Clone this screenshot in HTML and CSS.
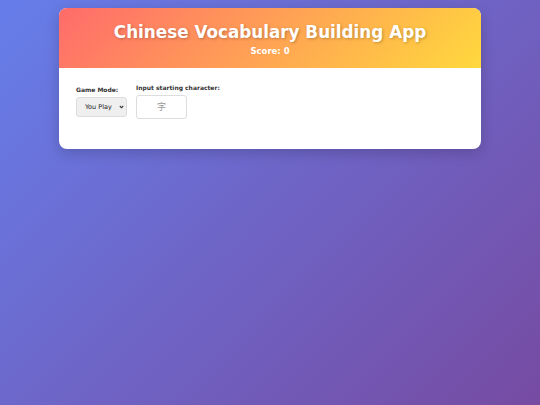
FILE: index.html
```html
<!DOCTYPE html>
<html>
<head>
<meta charset="utf-8">
<link rel="stylesheet" href="styles.css">
</head>
<body>
<div class="app">
  <header class="header">
    <h1 class="title">Chinese Vocabulary Building App</h1>
    <div class="score">Score: 0</div>
  </header>
  <main class="content">
    <div class="controls">
      <div class="field">
        <label class="label">Game Mode:</label>
        <div class="select-wrap">
          <select class="select">
            <option>You Play</option>
          </select>
          <svg class="chevron" width="5" height="4" viewBox="0 0 5 4"><path d="M0.8 1 L2.5 2.8 L4.2 1" fill="none" stroke="#333" stroke-width="1.1"/></svg>
        </div>
      </div>
      <div class="field">
        <label class="label">Input starting character:</label>
        <input class="input" type="text" placeholder="字">
      </div>
    </div>
  </main>
</div>
</body>
</html>
```
FILE: styles.css
```css
html, body {
  margin: 0;
  height: 100%;
}
body {
  background: linear-gradient(135deg, #667eea 0%, #764ba2 100%);
  font-family: "DejaVu Sans", Verdana, sans-serif;
  padding-top: 8px;
  box-sizing: border-box;
}
.app {
  width: 422px;
  margin: 0 auto;
  background: #fff;
  border-radius: 8px;
  overflow: hidden;
  box-shadow: 0 4px 14px rgba(0,0,0,0.18);
}
.header {
  height: 60px;
  box-sizing: border-box;
  padding-top: 13px;
  text-align: center;
  color: #fff;
  background: linear-gradient(135deg, #ff6b6b 0%, #ffd93d 100%);
}
.title {
  margin: 0;
  font-size: 16.8px;
  line-height: 22px;
  font-weight: bold;
  text-shadow: 1px 1px 3px rgba(0,0,0,0.25);
}
.score {
  font-size: 8.5px;
  font-weight: bold;
  line-height: 12px;
  margin-top: 2px;
}
.content {
  padding: 16px 17px 30px;
}
.controls {
  display: flex;
  align-items: flex-end;
  gap: 9px;
}
.field {
  display: flex;
  flex-direction: column;
}
.label {
  font-size: 6px;
  font-weight: bold;
  color: #333;
  margin-bottom: 4px;
}
.select-wrap {
  position: relative;
  margin-bottom: 2px;
}
.select {
  display: block;
  -webkit-appearance: none;
  appearance: none;
  width: 51px;
  height: 20px;
  box-sizing: border-box;
  font-family: "DejaVu Sans", sans-serif;
  font-size: 6.5px;
  color: #222;
  background: #efefef;
  border: 1px solid #ddd;
  border-radius: 3px;
  padding: 0 0 0 8px;
  margin: 0;
}
.chevron {
  position: absolute;
  right: 3px;
  top: 8px;
  pointer-events: none;
}
.input {
  display: block;
  width: 51px;
  height: 24px;
  box-sizing: border-box;
  margin: 0;
  border: 1px solid #ddd;
  border-radius: 3px;
  text-align: center;
  font-size: 9px;
  font-family: "DejaVu Sans", "Noto Sans CJK SC", sans-serif;
}
.input::placeholder {
  color: #999;
}
```
